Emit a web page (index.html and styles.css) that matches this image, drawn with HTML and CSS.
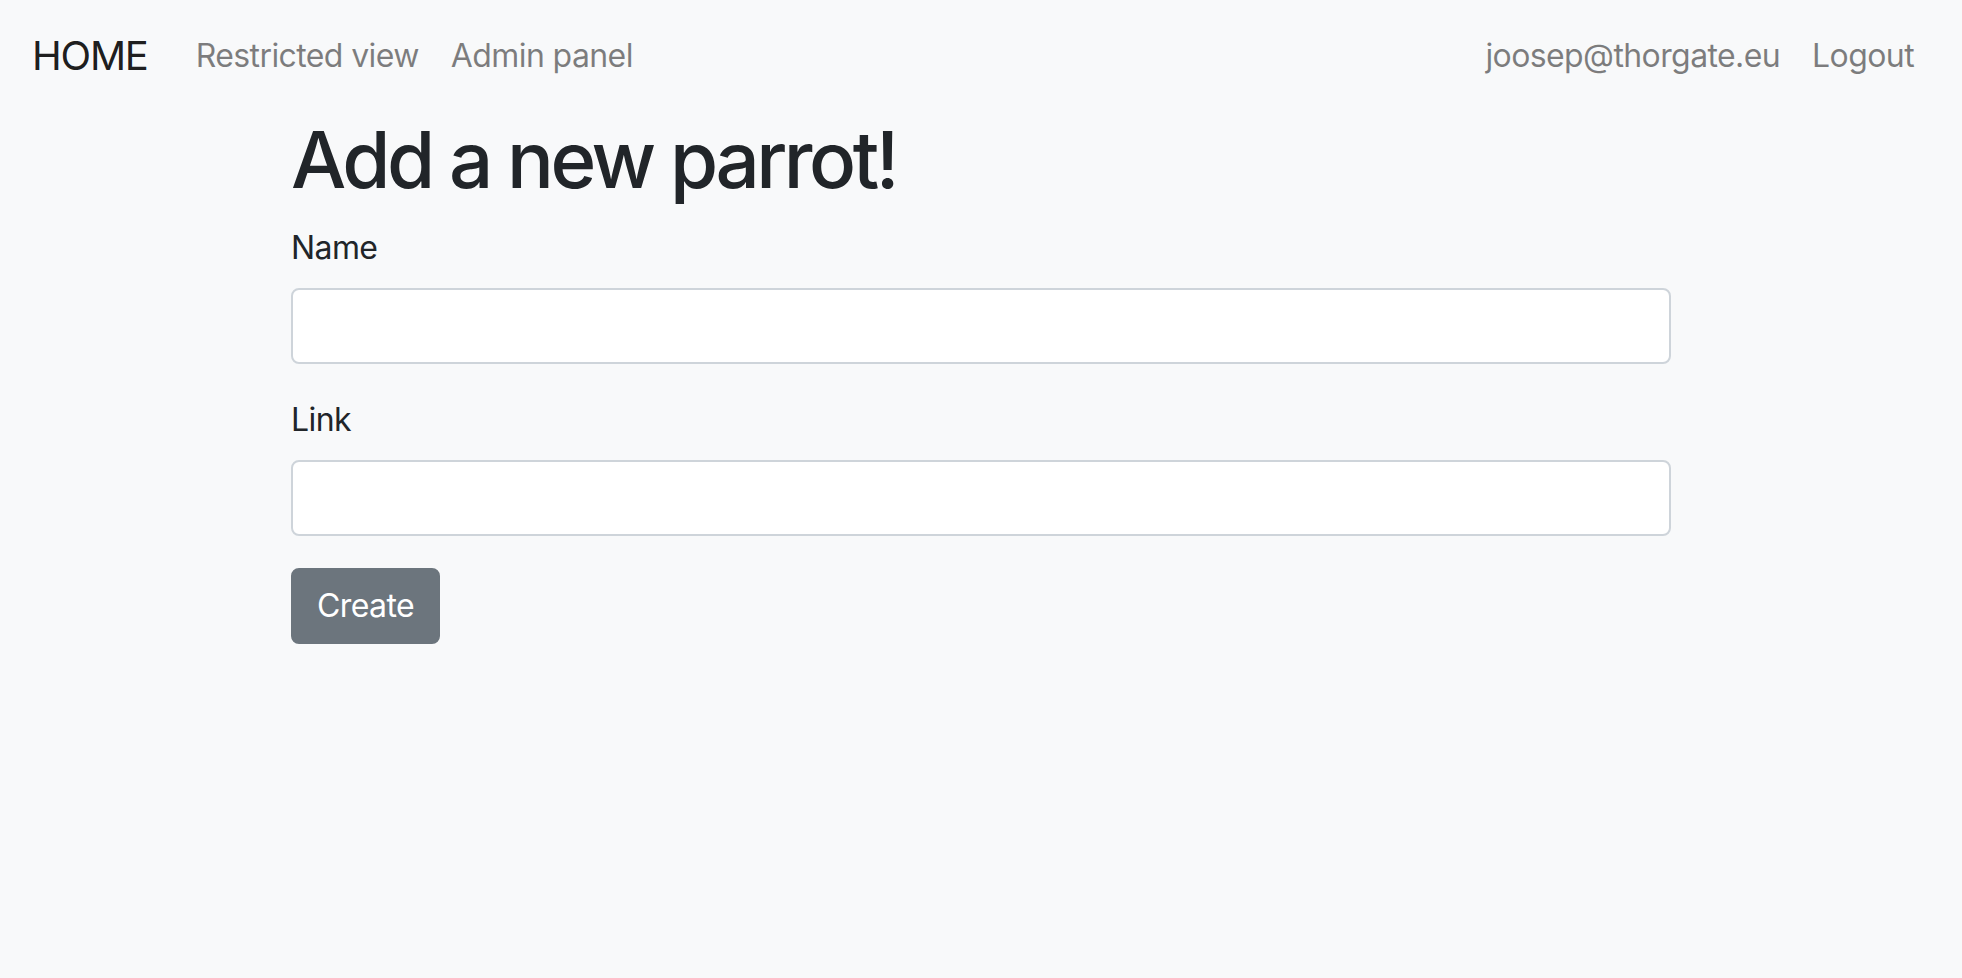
FILE: index.html
```html
<!DOCTYPE html>
<html lang="en">
<head>
<meta charset="utf-8">
<title>Add a new parrot!</title>
<link rel="stylesheet" href="styles.css">
</head>
<body>
<nav class="navbar">
  <a class="brand" href="#">HOME</a>
  <ul class="nav">
    <li><a class="nav-link" href="#">Restricted view</a></li>
    <li><a class="nav-link" href="#">Admin panel</a></li>
  </ul>
  <ul class="nav nav-right">
    <li><a class="nav-link" href="#">joosep@thorgate.eu</a></li>
    <li><a class="nav-link" href="#">Logout</a></li>
  </ul>
</nav>
<main class="container">
  <h1 class="title">Add a new parrot!</h1>
  <form class="form">
    <div class="form-group">
      <label class="label" for="name">Name</label>
      <input class="form-control" id="name" type="text">
    </div>
    <div class="form-group">
      <label class="label" for="link">Link</label>
      <input class="form-control" id="link" type="text">
    </div>
    <button class="btn" type="button">Create</button>
  </form>
</main>
</body>
</html>
```
FILE: styles.css
```css
* { box-sizing: border-box; }
html, body { margin: 0; padding: 0; }
body {
  background: #f8f9fa;
  color: #212529;
  font-family: Inter, "Noto Sans", "Liberation Sans", sans-serif;
  font-size: 32px;
  line-height: 1.5;
  letter-spacing: -0.6px;
}
.navbar {
  display: flex;
  align-items: center;
  padding: 16px 32px;
}
.brand {
  font-size: 40px;
  line-height: 60px;
  padding: 10px 0;
  margin-right: 32px;
  color: rgba(0,0,0,.9);
  text-decoration: none;
  letter-spacing: -1.2px;
}
.nav {
  display: flex;
  list-style: none;
  margin: 0;
  padding: 0;
}
.nav-right { margin-left: auto; }
.nav-link {
  display: block;
  padding: 16px;
  color: rgba(0,0,0,.5);
  text-decoration: none;
  font-size: 32px;
  line-height: 48px;
}
.container {
  width: 1440px;
  margin: 0 auto;
  padding: 0 30px;
}
.title {
  margin: 0 0 16px;
  font-size: 78px;
  font-weight: 500;
  line-height: 96px;
  letter-spacing: -3.5px;
}
.form-group { margin-bottom: 32px; }
.label {
  display: inline-block;
  margin-bottom: 16px;
}
.form-control {
  display: block;
  width: 100%;
  height: 76px;
  padding: 12px 24px;
  font: inherit;
  letter-spacing: inherit;
  background: #fff;
  border: 2px solid #ced4da;
  border-radius: 8px;
}
.btn {
  display: inline-block;
  padding: 12px 24px;
  font: inherit;
  letter-spacing: inherit;
  line-height: 48px;
  color: #fff;
  background: #6c757d;
  border: 2px solid #6c757d;
  border-radius: 8px;
}
```
